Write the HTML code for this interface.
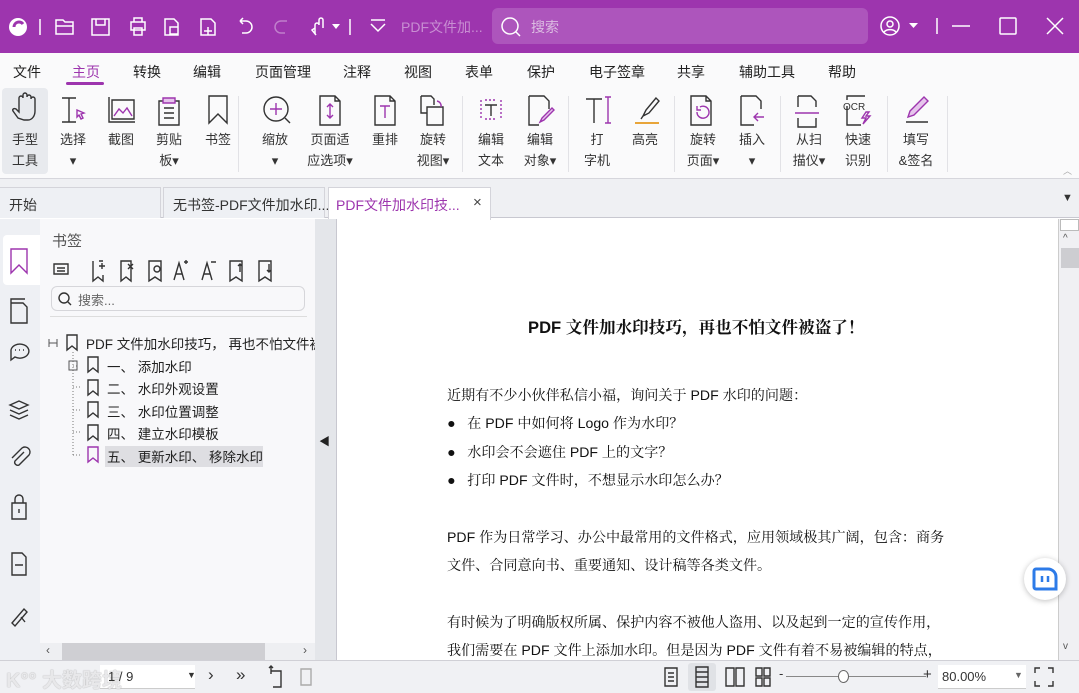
<!DOCTYPE html>
<html><head><meta charset="utf-8"><style>
*{margin:0;padding:0;box-sizing:border-box}
body{width:1079px;height:693px;overflow:hidden;font-family:"Liberation Sans","Noto Sans CJK SC",sans-serif;background:#fff;position:relative;color:#222}
.a{position:absolute}
.t{position:absolute;white-space:nowrap}
svg{position:absolute;overflow:visible}
.ic{fill:none;stroke:#333;stroke-width:1.4}
.w{fill:none;stroke:#fff;stroke-width:1.5}
.menu .t{font-size:14px;top:62px;color:#222}
.lab{font-size:13px;color:#333;text-align:center;width:50px;line-height:21px}
.doc{font-family:"Liberation Sans","Noto Serif CJK SC","Noto Sans CJK SC",serif;font-size:14.1px;color:#111}
</style></head><body>
<!-- title bar -->
<div class="a" style="left:0;top:0;width:1079px;height:53px;background:#9d35ae"></div>
<svg width="1079" height="53" style="left:0;top:0">
<circle cx="18" cy="27" r="9" fill="#fff"/><path d="M14 27a5 5 0 0 1 9-3" stroke="#9d35ae" stroke-width="3" fill="none"/>
<line x1="40" y1="19" x2="40" y2="35" class="w" stroke-width="1"/>
<path class="w" d="M56 20h7l2 2h8v12H56z M56 26h17"/>
<path class="w" d="M92 19h17v16H92z M96 19v6h9v-6"/>
<path class="w" d="M131 22h14v8h-14z M134 22v-4h8v4 M134 28h8v7h-8z"/>
<path class="w" d="M165 19h9l4 4v12h-13z M170 27h8v7h-8z"/>
<path class="w" d="M201 19h10l4 4v12h-14z M208 27v8 M204 31h8"/>
<path class="w" d="M240 21h6a6 6 0 0 1 0 12h-4 M240 21l3-3 M240 21l3 3"/>
<path d="M287 21h-6a6 6 0 0 0 0 12h4" fill="none" stroke="#c07fcc" stroke-width="1.5"/>
<path class="w" d="M315 34v-9a2 2 0 0 1 4 0v-5a2 2 0 0 1 4 0v8 M315 28l-3 2 4 5"/>
<path d="M332 24h8l-4 5z" fill="#fff"/>
<line x1="350" y1="19" x2="350" y2="35" class="w" stroke-width="1"/>
<path class="w" d="M371 20h14 M371 24l7 7 7-7"/>
</svg>
<div class="t" style="left:401px;top:17px;font-size:14px;color:#c88ed2">PDF文件加...</div>
<div class="a" style="left:492px;top:8px;width:376px;height:36px;background:#ad55bc;border-radius:6px"></div>
<svg width="40" height="40" style="left:498px;top:14px"><circle cx="12" cy="12" r="8" class="w" stroke-width="2"/><path class="w" d="M18 18l4 4" stroke-width="2"/></svg>
<div class="t" style="left:531px;top:17px;font-size:14px;color:#dcbde2">搜索</div>
<svg width="200" height="53" style="left:870px;top:0">
<circle cx="20" cy="26" r="9" class="w"/><circle cx="20" cy="24" r="3" class="w"/><path class="w" d="M14 32a7 5 0 0 1 12 0"/>
<path d="M39 23h9l-4.5 5z" fill="#fff"/>
<line x1="67" y1="18" x2="67" y2="34" class="w" stroke-width="1"/>
<line x1="82" y1="26" x2="100" y2="26" class="w"/>
<rect x="130" y="18" width="16" height="16" class="w" rx="1"/>
<path class="w" d="M177 18l16 16 M193 18l-16 16"/>
</svg>
<!-- menu -->
<div class="a" style="left:0;top:53px;width:1079px;height:126px;background:#fafafb;border-bottom:1px solid #d6d6dc"></div>
<div class="menu">
<div class="t" style="left:13px">文件</div><div class="t" style="left:72px;color:#9d35ae">主页</div>
<div class="t" style="left:133px">转换</div><div class="t" style="left:193px">编辑</div>
<div class="t" style="left:255px">页面管理</div><div class="t" style="left:343px">注释</div>
<div class="t" style="left:404px">视图</div><div class="t" style="left:465px">表单</div>
<div class="t" style="left:527px">保护</div><div class="t" style="left:589px">电子签章</div>
<div class="t" style="left:677px">共享</div><div class="t" style="left:739px">辅助工具</div>
<div class="t" style="left:828px">帮助</div>
</div>
<div class="a" style="left:66px;top:82px;width:38px;height:3px;background:#9d35ae;border-radius:2px"></div>
<!-- ribbon -->
<div class="a" style="left:2px;top:88px;width:46px;height:86px;background:#e8eaee;border-radius:4px"></div>
<div class="a" style="left:238px;top:96px;width:1px;height:76px;background:#e2e2e6"></div>
<div class="a" style="left:462px;top:96px;width:1px;height:76px;background:#e2e2e6"></div>
<div class="a" style="left:568px;top:96px;width:1px;height:76px;background:#e2e2e6"></div>
<div class="a" style="left:674px;top:96px;width:1px;height:76px;background:#e2e2e6"></div>
<div class="a" style="left:780px;top:96px;width:1px;height:76px;background:#e2e2e6"></div>
<div class="a" style="left:887px;top:96px;width:1px;height:76px;background:#e2e2e6"></div>
<div class="a" style="left:947px;top:96px;width:1px;height:76px;background:#e2e2e6"></div>
<svg width="1079" height="140" style="left:0;top:0">
<g class="ic">
<path d="M18 118l-5-7c-1-2 1-3 3-2l3 3v-14a2 2 0 0 1 4 0v-3a2 2 0 0 1 4 0v2a2 2 0 0 1 4 0v2a2 2 0 0 1 4 0v12c0 5-3 9-7 9h-4z"/>
<path d="M62 98h14 M69 98v24 M62 122h14"/><path d="M77 110l7 3-3 1 2 4-2 1-2-4-2 2z" stroke="#9d35ae"/>
<path d="M109 97v25h26 M112 100h22v19h-22z"/><path d="M114 116l5-7 4 4 4-5 5 8" stroke="#9d35ae"/>
<path d="M159 101h20v24h-20z M164 108h10 M164 113h10 M164 118h10"/><path d="M163 98h12v5h-12z" fill="#e6c5ec" stroke="#9d35ae"/>
<path d="M209 96h18v27l-9-9-9 9z"/>
<circle cx="276" cy="109" r="12"/><path d="M285 118l5 5"/><path d="M276 103v12 M270 109h12" stroke="#9d35ae"/>
<path d="M320 96h15l5 5v24h-20z M335 96v5h5"/><path d="M330 104v14 M327 107l3-3 3 3 M327 115l3 3 3-3" stroke="#9d35ae"/>
<path d="M375 96h15l5 5v24h-20z M390 96v5h5"/><path d="M380 106h10 M385 106v12" stroke="#9d35ae"/>
<path d="M421 96h10l3 3v6 M421 96v17h6 M427 107h16v18h-16z"/><path d="M437 101a5 5 0 0 1 4 6" stroke="#9d35ae"/>
<path d="M481 100v19 M501 100v19 M485 100h12 M485 119h12" stroke="#9d35ae" stroke-dasharray="2 2"/><path d="M485 105h12 M491 105v11"/>
<path d="M529 96h15l5 5v8 M529 96v29h10"/><path d="M552 108l-10 10-2 4 4-2 10-10z" stroke="#9d35ae" fill="#e6c5ec"/>
<path d="M586 99h16 M594 99v24"/><path d="M608 97v26 M605 97h6 M605 123h6" stroke="#9d35ae"/>
<path d="M656 98l-10 12-3 6 6-3 10-12z M643 116l-2 3"/><path d="M635 123h24" stroke="#e8a53a" stroke-width="2"/>
<path d="M691 96h15l5 5v24h-20z M706 96v5h5"/><path d="M697 112a6 6 0 1 0 3-5 M697 106v4h4" stroke="#9d35ae"/>
<path d="M741 96h15l5 5v8 M741 96v29h13"/><path d="M764 117h-10 M758 113l-4 4 4 4" stroke="#9d35ae"/>
<path d="M798 96h13l5 5v6 M798 96v11 M798 118v9h18v-9"/><path d="M795 113h24" stroke="#9d35ae"/>
<path d="M847 106v19h14 M865 96h-18v4"/><path d="M866 112l-4 6h4l-3 6 7-8h-4l3-4z" stroke="#9d35ae"/>
<path d="M924 97l-14 14-2 6 6-2 14-14z" stroke="#9d35ae" fill="#e6c5ec"/><path d="M906 122h22"/>
</g>
<text x="843" y="110" font-size="10" font-family="Liberation Sans" fill="#333">OCR</text>
</svg>
<div class="t lab" style="left:0;top:129px">手型<br>工具</div>
<div class="t lab" style="left:48px;top:129px">选择<br>▾</div>
<div class="t lab" style="left:96px;top:129px">截图</div>
<div class="t lab" style="left:144px;top:129px">剪贴<br>板▾</div>
<div class="t lab" style="left:193px;top:129px">书签</div>
<div class="t lab" style="left:250px;top:129px">缩放<br>▾</div>
<div class="t lab" style="left:300px;top:129px;width:60px">页面适<br>应选项▾</div>
<div class="t lab" style="left:360px;top:129px">重排</div>
<div class="t lab" style="left:408px;top:129px">旋转<br>视图▾</div>
<div class="t lab" style="left:466px;top:129px">编辑<br>文本</div>
<div class="t lab" style="left:515px;top:129px">编辑<br>对象▾</div>
<div class="t lab" style="left:572px;top:129px">打<br>字机</div>
<div class="t lab" style="left:620px;top:129px">高亮</div>
<div class="t lab" style="left:678px;top:129px">旋转<br>页面▾</div>
<div class="t lab" style="left:727px;top:129px">插入<br>▾</div>
<div class="t lab" style="left:784px;top:129px">从扫<br>描仪▾</div>
<div class="t lab" style="left:833px;top:129px">快速<br>识别</div>
<div class="t lab" style="left:891px;top:129px">填写<br>&amp;签名</div>
<div class="t" style="left:1063px;top:164px;font-size:9px;color:#aaa">︿</div>
<!-- tabs -->
<div class="a" style="left:0;top:179px;width:1079px;height:39px;background:#eff0f3;border-bottom:1px solid #c8c8d0"></div>
<div class="a" style="left:0;top:187px;width:161px;height:31px;background:#eef0f4;border:1px solid #d4d4da;border-bottom:none;border-left:none"></div>
<div class="t" style="left:9px;top:195px;font-size:14px;color:#333">开始</div>
<div class="a" style="left:163px;top:187px;width:162px;height:31px;background:#eef0f4;border:1px solid #d4d4da;border-bottom:none"></div>
<div class="t" style="left:173px;top:195px;font-size:14px;color:#333">无书签-PDF文件加水印...</div>
<div class="a" style="left:328px;top:187px;width:163px;height:33px;background:#fff;border:1px solid #d4d4da;border-bottom:none"></div>
<div class="t" style="left:336px;top:195px;font-size:14px;color:#9d35ae">PDF文件加水印技...</div>
<div class="t" style="left:473px;top:194px;font-size:15px;color:#444">×</div>
<div class="t" style="left:1062px;top:192px;font-size:11px;color:#333">▼</div>
<!-- left strip -->
<div class="a" style="left:0;top:219px;width:40px;height:441px;background:#eef0f4"></div>
<div class="a" style="left:3px;top:235px;width:38px;height:50px;background:#fff;border-radius:4px 0 0 4px"></div>
<svg width="40" height="441" style="left:0;top:219px"><g class="ic">
<path d="M11 30h16v24l-8-8-8 8z" stroke="#9d35ae"/>
<path d="M11 84h12l4 4v16h-16z M15 80h10 M11 84v-4h14"/>
<path d="M11 131a9 7 0 1 1 4 7l-4 3z M15 131h1 M19 131h1 M23 131h1"/>
<path d="M19 182l-9 4 9 4 9-4z M10 191l9 4 9-4 M10 196l9 4 9-4"/>
<path d="M24 233l-9 9a3 3 0 0 0 4 4l10-10a5 5 0 0 0-7-7l-10 10"/>
<path d="M12 284h14v16h-14z M15 284v-4a4 4 0 0 1 8 0v4 M19 290v4"/>
<path d="M12 334h10l4 4v18h-14z M15 346h8"/>
<path d="M12 404l12-14 3 3-12 14z M21 398l4 5"/>
</g></svg>
<!-- bookmark panel -->
<div class="a" style="left:40px;top:219px;width:275px;height:441px;background:#f8f8fa"></div>
<div class="t" style="left:52px;top:230px;font-size:15px;color:#555">书签</div>
<svg width="260" height="30" style="left:50px;top:256px"><g class="ic" stroke-width="1.2">
<path d="M4 8h14v10h-14z M7 12h8 M7 15h8"/>
<path d="M43 5v20l5-4 5 4v-6 M53 5h-4 M55 10h-6 M52 7v6"/>
<path d="M71 5h10v20l-5-4-5 4z M78 8l5 5 M83 8l-5 5"/>
<path d="M99 5h12v20l-6-4-6 4z"/><circle cx="107" cy="13" r="3" class="ic"/>
<path d="M124 24l5-17 5 17 M126 18h6 M134 6h4 M136 4v4"/>
<path d="M152 24l5-17 5 17 M154 18h6 M161 6h5"/>
<path d="M180 5h12v20l-6-4-6 4z M190 8v8 M188 10l2-2 2 2"/>
<path d="M209 5h12v20l-6-4-6 4z M219 8v8 M217 14l2 2 2-2"/>
</g></svg>
<div class="a" style="left:51px;top:286px;width:254px;height:25px;border:1px solid #d6d6da;border-radius:6px;background:#f8f8fa"></div>
<svg width="20" height="20" style="left:56px;top:290px"><circle cx="8" cy="8" r="5" class="ic"/><path class="ic" d="M12 12l3 3"/></svg>
<div class="t" style="left:78px;top:290px;font-size:13px;color:#666">搜索...</div>
<div class="a" style="left:50px;top:316px;width:257px;height:1px;background:#ddd"></div>
<svg width="270" height="130" style="left:40px;top:330px"><g fill="none" stroke="#777" stroke-dasharray="1 2" stroke-width="1">
<path d="M33 22v103 M33 36h6 M33 57h8 M33 80h8 M33 102h8 M33 125h8"/></g>
<g fill="none" stroke="#555" stroke-width="1"><path d="M9 9v8 M9 13h8 M17 9v8"/><rect x="29" y="31" width="8" height="9"/></g>
<g class="ic" stroke-width="1.3"><path d="M27 5h10v15l-5-4-5 4z M48 27h10v15l-5-4-5 4z M48 50h10v15l-5-4-5 4z M48 72h10v15l-5-4-5 4z M48 95h10v15l-5-4-5 4z"/>
<path d="M48 117h10v15l-5-4-5 4z" stroke="#9d35ae"/></g></svg>
<div class="a" style="left:105px;top:446px;width:158px;height:21px;background:#dedee2"></div>
<div class="t" style="left:86px;top:333px;font-size:13.5px;color:#222">PDF 文件加水印技巧， 再也不怕文件被</div>
<div class="t" style="left:107px;top:356px;font-size:13.5px;color:#222">一、 添加水印</div>
<div class="t" style="left:107px;top:378px;font-size:13.5px;color:#222">二、 水印外观设置</div>
<div class="t" style="left:107px;top:401px;font-size:13.5px;color:#222">三、 水印位置调整</div>
<div class="t" style="left:107px;top:423px;font-size:13.5px;color:#222">四、 建立水印模板</div>
<div class="t" style="left:107px;top:446px;font-size:13.5px;color:#222">五、 更新水印、 移除水印</div>
<div class="a" style="left:40px;top:643px;width:275px;height:17px;background:#eeeff2"></div>
<div class="a" style="left:62px;top:643px;width:203px;height:17px;background:#cfcfd3"></div>
<div class="t" style="left:46px;top:643px;font-size:12px;color:#555">‹</div>
<div class="t" style="left:303px;top:643px;font-size:12px;color:#555">›</div>
<!-- divider -->
<div class="a" style="left:315px;top:219px;width:22px;height:441px;background:#e4e6ea"></div>
<div class="t" style="left:319px;top:433px;font-size:11px;color:#222">◀</div>
<div class="a" style="left:336px;top:219px;width:1px;height:441px;background:#c8c8d0"></div>
<!-- document -->
<div class="a" style="left:1058px;top:219px;width:21px;height:441px;background:#f0f0f3;border-left:1px solid #ccc"></div>
<div class="a" style="left:1060px;top:219px;width:19px;height:12px;border:1px solid #bbb;background:#fff"></div>
<div class="t" style="left:1063px;top:233px;font-size:10px;color:#555">^</div>
<div class="a" style="left:1061px;top:248px;width:18px;height:20px;background:#cdcdd1"></div>
<div class="t" style="left:1063px;top:641px;font-size:10px;color:#555">v</div>
<div class="t doc" style="left:528px;top:314px;font-size:16.6px;font-weight:bold">PDF 文件加水印技巧，再也不怕文件被盗了！</div>
<div class="t doc" style="left:447px;top:385px">近期有不少小伙伴私信小福，询问关于 PDF 水印的问题：</div>
<div class="t doc" style="left:447px;top:413px">●&nbsp;&nbsp;&nbsp;在 PDF 中如何将 Logo 作为水印？</div>
<div class="t doc" style="left:447px;top:442px">●&nbsp;&nbsp;&nbsp;水印会不会遮住 PDF 上的文字？</div>
<div class="t doc" style="left:447px;top:470px">●&nbsp;&nbsp;&nbsp;打印 PDF 文件时，不想显示水印怎么办？</div>
<div class="t doc" style="left:447px;top:527px">PDF 作为日常学习、办公中最常用的文件格式，应用领域极其广阔，包含：商务</div>
<div class="t doc" style="left:447px;top:555px">文件、合同意向书、重要通知、设计稿等各类文件。</div>
<div class="t doc" style="left:447px;top:612px">有时候为了明确版权所属、保护内容不被他人盗用、以及起到一定的宣传作用，</div>
<div class="t doc" style="left:447px;top:640px">我们需要在 PDF 文件上添加水印。但是因为 PDF 文件有着不易被编辑的特点，</div>
<div class="a" style="left:1024px;top:558px;width:42px;height:42px;border-radius:50%;background:#fff;box-shadow:0 1px 6px rgba(0,0,0,.25)"></div>
<svg width="30" height="30" style="left:1030px;top:565px"><path d="M6 4h12a8 8 0 0 1 8 8v12H6a2 2 0 0 1-2-2V6a2 2 0 0 1 2-2z" fill="none" stroke="#2d7be8" stroke-width="3"/><path d="M12 11v6 M18 11v6" stroke="#2d7be8" stroke-width="2.5"/></svg>
<!-- bottom -->
<div class="a" style="left:0;top:660px;width:1079px;height:33px;background:#f0f1f4;border-top:1px solid #d0d0d6"></div>
<div class="a" style="left:100px;top:665px;width:95px;height:24px;background:#fff;border-bottom:1px solid #ccc"></div>
<div class="t" style="left:6px;top:664px;font-size:20px;color:#e8e8ea;font-weight:bold;text-shadow:0 0 1px #999">K°° 大数跨境</div>
<div class="t" style="left:108px;top:669px;font-size:13px;color:#333">1 / 9</div>
<div class="t" style="left:187px;top:670px;font-size:9px;color:#333">▼</div>
<div class="t" style="left:208px;top:665px;font-size:17px;color:#333">›</div>
<div class="t" style="left:236px;top:665px;font-size:17px;color:#333">»</div>
<svg width="60" height="30" style="left:265px;top:663px"><g class="ic" stroke-width="1.2"><path d="M6 3v8 M4 5l2-2 2 2 M6 8h10v16H8"/><path d="M36 6h10v16H36z" stroke="#aaa"/></g></svg>
<div class="a" style="left:688px;top:663px;width:28px;height:28px;background:#e0e2e6;border-radius:3px"></div>
<svg width="110" height="30" style="left:660px;top:663px"><g class="ic" stroke-width="1.2">
<path d="M5 5h12v18H5z M8 10h6 M8 14h6 M8 18h6"/><path d="M36 4h12v20H36z M36 9h12 M36 14h12 M36 19h12"/>
<path d="M66 5h8v18h-8z M76 5h8v18h-8z"/><path d="M96 5h6v8h-6z M104 5h6v8h-6z M96 15h6v8h-6z M104 15h6v8h-6z"/></g></svg>
<div class="a" style="left:786px;top:676px;width:140px;height:1px;background:#888"></div>
<div class="t" style="left:779px;top:666px;font-size:13px;color:#333">-</div>
<div class="t" style="left:923px;top:666px;font-size:15px;color:#333">+</div>
<div class="a" style="left:838px;top:670px;width:11px;height:13px;border:1px solid #666;border-radius:50%;background:#fff"></div>
<div class="a" style="left:938px;top:665px;width:88px;height:24px;background:#fff;border-bottom:1px solid #ccc"></div>
<div class="t" style="left:942px;top:669px;font-size:13px;color:#333">80.00%</div>
<div class="t" style="left:1014px;top:670px;font-size:9px;color:#666">▼</div>
<svg width="20" height="20" style="left:1034px;top:667px"><path class="ic" stroke-width="1.2" d="M1 6V1h5 M14 1h5v5 M19 14v5h-5 M6 19H1v-5"/></svg>
</body></html>
